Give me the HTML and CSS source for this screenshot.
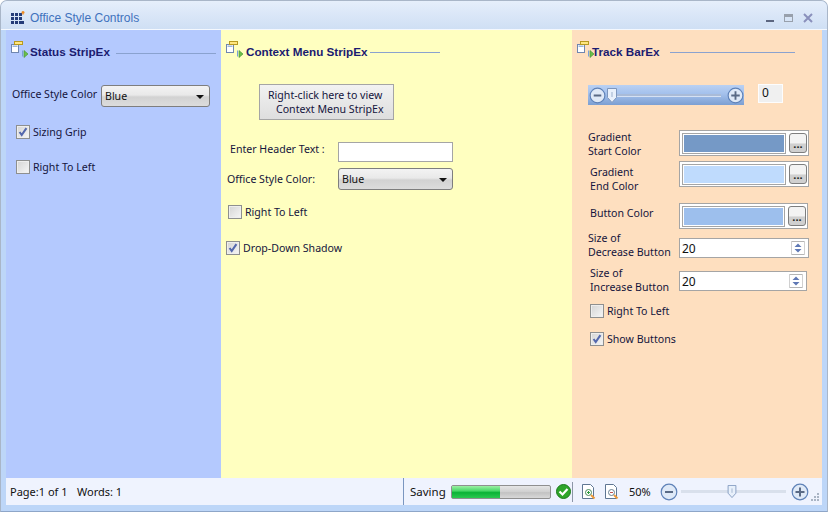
FILE: index.html
```html
<!DOCTYPE html>
<html lang="en">
<head>
<meta charset="utf-8">
<title>Office Style Controls</title>
<link rel="stylesheet" href="styles.css">
</head>
<body>
<svg class="defs" width="0" height="0">
  <symbol id="hdr" viewBox="0 0 18 18">
    <rect x="0.5" y="3.500" width="7" height="8" fill="#fff" stroke="#6f86b0"/>
    <rect x="1.5" y="4.500" width="5" height="1.500" fill="#9db7dc"/>
    <rect x="3.5" y="0.500" width="8" height="3" fill="#ffe680" stroke="#b89a20"/>
    <path d="M11.500 9.500v6" stroke="#7aa0d8"/>
    <path d="M13 9.500l4 3.500-4 3.500z" fill="#6cc04a" stroke="#3f9030" stroke-width=".6"/>
  </symbol>
  <symbol id="check" viewBox="0 0 14 14">
    <path d="M3 7l2.500 3.500L11 2.500" fill="none" stroke="#5468ad" stroke-width="2.400"/>
  </symbol>
  <symbol id="minus" viewBox="0 0 18 18">
    <circle cx="9" cy="9" r="7.800" fill="#dfe9f7" stroke="#5f82b8" stroke-width="1.200"/>
    <path d="M5 9h8" stroke="#5a6a85" stroke-width="2"/>
  </symbol>
  <symbol id="plus" viewBox="0 0 18 18">
    <circle cx="9" cy="9" r="7.800" fill="#dfe9f7" stroke="#5f82b8" stroke-width="1.200"/>
    <path d="M4.500 9h9M9 4.500v9" stroke="#5a6a85" stroke-width="2"/>
  </symbol>
  <symbol id="thumb" viewBox="0 0 10 15">
    <path d="M.5.500h9v9l-4.500 5-4.500-5z" fill="#e8f0fb" stroke="#7d96bd"/>
    <path d="M5 4v5" stroke="#9db0cc"/>
  </symbol>
  <symbol id="spin" viewBox="0 0 14 14">
    <path d="M0 .500h14M0 13.500h14" stroke="#b5b5b5"/>
    <path d="M7 2.500l3.500 3.500h-7zM7 11.500L3.500 8h7z" fill="#5f78b5"/>
    <path d="M.5 0v14M13.500 0v14" stroke="#d0d0d0"/>
  </symbol>
</svg>

<div class="window">
  <header class="titlebar">
    <svg class="app-icon" width="14" height="14" viewBox="0 0 14 14">
      <path d="M0 2h3v3H0zM4 2h3v3H4zM8 2h3v3H8zM0 6h3v3H0zM4 6h3v3H4zM8 6h3v3H8zM0 10h3v3H0zM4 10h3v3H4zM8 10h5v3H8z" fill="#253c78"/>
      <path d="M10.500 1.500h3M12 0v3.500" stroke="#ee8a20" stroke-width="1.500"/>
    </svg>
    <span class="title">Office Style Controls</span>
    <div class="caption">
      <span class="cap-min"></span>
      <span class="cap-max"></span>
      <svg width="10" height="10" viewBox="0 0 10 10"><path d="M1 1l8 8M9 1L1 9" stroke="#8a90bc" stroke-width="2"/></svg>
    </div>
  </header>

  <main class="panels">
    <section class="panel panel-blue">
      <div class="head">
        <svg class="hdr-icon" width="18" height="18"><use href="#hdr"/></svg>
        <h2 class="head-title s-title">Status StripEx</h2>
        <span class="head-line s-line"></span>
      </div>
      <div class="row s-color">
        <span class="lbl s-lbl">Office Style Color</span>
        <div class="combo s-combo">Blue</div>
      </div>
      <label class="chk s-grip"><span class="box on"><svg width="12" height="12"><use href="#check"/></svg></span>Sizing Grip</label>
      <label class="chk s-rtl"><span class="box"></span>Right To Left</label>
    </section>

    <section class="panel panel-yellow">
      <div class="head">
        <svg class="hdr-icon" width="18" height="18"><use href="#hdr"/></svg>
        <h2 class="head-title">Context Menu StripEx</h2>
        <span class="head-line c-line"></span>
      </div>
      <div class="ctx-btn"><span>Right-click here to view</span><span class="ctx-2">Context Menu StripEx</span></div>
      <div class="row c-head">
        <span class="lbl c-lbl1">Enter Header Text :</span>
        <span class="input"></span>
      </div>
      <div class="row c-color">
        <span class="lbl c-lbl2">Office Style Color:</span>
        <div class="combo c-combo">Blue</div>
      </div>
      <label class="chk c-rtl"><span class="box"></span>Right To Left</label>
      <label class="chk c-shadow"><span class="box on"><svg width="12" height="12"><use href="#check"/></svg></span>Drop-Down Shadow</label>
    </section>

    <section class="panel panel-orange">
      <div class="head">
        <svg class="hdr-icon t-icon" width="18" height="18"><use href="#hdr"/></svg>
        <h2 class="head-title">Track BarEx</h2>
        <span class="head-line t-line"></span>
      </div>
      <div class="row t-track">
        <div class="track">
          <svg class="tb-btn" width="17" height="17"><use href="#minus"/></svg>
          <svg class="tb-thumb" width="10" height="15"><use href="#thumb"/></svg>
          <span class="tb-rail"></span>
          <svg class="tb-btn" width="17" height="17"><use href="#plus"/></svg>
        </div>
        <div class="num">0</div>
      </div>
      <div class="row t-r1">
        <span class="lbl2 l0">Gradient<br>Start Color</span>
        <div class="colorbox"><span class="swatch c1"></span><span class="dots">...</span></div>
      </div>
      <div class="row t-r2">
        <span class="lbl2 l2 lt4">Gradient<br>End Color</span>
        <div class="colorbox"><span class="swatch c2"></span><span class="dots">...</span></div>
      </div>
      <div class="row t-r3">
        <span class="lbl2 l2 lt3">Button Color</span>
        <div class="colorbox w129"><span class="swatch c3"></span><span class="dots">...</span></div>
      </div>
      <div class="row t-r4">
        <span class="lbl2 l0">Size of<br>Decrease Button</span>
        <div class="spinner">20<svg width="14" height="14"><use href="#spin"/></svg></div>
      </div>
      <div class="row t-r5">
        <span class="lbl2 l2">Size of<br>Increase Button</span>
        <div class="spinner w128">20<svg width="14" height="14"><use href="#spin"/></svg></div>
      </div>
      <label class="chk t-rtl"><span class="box"></span>Right To Left</label>
      <label class="chk t-show"><span class="box on"><svg width="12" height="12"><use href="#check"/></svg></span>Show Buttons</label>
    </section>
  </main>

  <footer class="status">
    <span class="st-page">Page:1 of 1</span>
    <span class="st-words">Words: 1</span>
    <span class="sep sep1"></span>
    <span class="st-saving">Saving</span>
    <div class="progress"><span class="fill"></span></div>
    <svg class="ok" width="15" height="15" viewBox="0 0 15 15">
      <circle cx="7.500" cy="7.500" r="7" fill="#2fa52a" stroke="#1c7a1c"/>
      <path d="M3.500 7.500l3 3 5-5.500" fill="none" stroke="#fff" stroke-width="2.200"/>
    </svg>
    <span class="sep sep2"></span>
    <svg class="doc doc1" width="14" height="16" viewBox="0 0 14 16">
      <path d="M.5.500h8l3 3v11H.5z" fill="#fff" stroke="#5f7692"/>
      <circle cx="6.500" cy="8.500" r="3" fill="#fff" stroke="#4a8a5a"/>
      <path d="M5 8.500h3M6.500 7v3" stroke="#2d9a3c"/>
      <path d="M9 11l3.500 3.500" stroke="#ee9a3a" stroke-width="2"/>
    </svg>
    <svg class="doc doc2" width="14" height="16" viewBox="0 0 14 16">
      <path d="M.5.500h8l3 3v11H.5z" fill="#fff" stroke="#5f7692"/>
      <circle cx="6.500" cy="8.500" r="3" fill="#fff" stroke="#6a7f90"/>
      <path d="M5 8.500h3" stroke="#c05050"/>
      <path d="M9 11l3.500 3.500" stroke="#ee9a3a" stroke-width="2"/>
    </svg>
    <span class="st-zoom">50%</span>
    <svg class="z-minus" width="18" height="18"><use href="#minus"/></svg>
    <div class="z-track"><svg class="z-thumb" width="10" height="13"><use href="#thumb"/></svg></div>
    <svg class="z-plus" width="18" height="18"><use href="#plus"/></svg>
    <svg class="grip" width="10" height="10" viewBox="0 0 10 10">
      <path d="M7 1h2v2H7zM4 4h2v2H4zM7 4h2v2H7zM1 7h2v2H1zM4 7h2v2H4zM7 7h2v2H7z" fill="#a9b4c4"/>
    </svg>
  </footer>
</div>
</body>
</html>
```

FILE: styles.css
```css
* { box-sizing: border-box; }
html, body { margin: 0; padding: 0; }
body {
  width: 828px;
  height: 512px;
  overflow: hidden;
  background: #fff;
  font-family: "Noto Sans", "Liberation Sans", sans-serif;
  font-size: 10.600px;
  color: #14143c;
}
.defs { position: absolute; }

.window {
  width: 828px;
  height: 512px;
  display: flex;
  flex-direction: column;
  padding: 0 5px 6px;
  border-radius: 7px 7px 0 0;
  border: 1px solid #a9b6c8;
  border-bottom-color: #8ea6c8;
  background: #bdd6f8;
  overflow: hidden;
}

.titlebar {
  flex: 0 0 29px;
  margin: 0 -5px;
  padding: 5px 14px 0 10px;
  display: flex;
  align-items: center;
  border-bottom: 1px solid #f4f8fe;
  background: linear-gradient(#e6effb 0, #dbe7f8 45%, #cfdff4 100%);
}
.app-icon { flex: none; }
.title { margin-left: 5px; color: #3f72bd; font-family: "Liberation Sans", sans-serif; font-size: 12px; }
.caption { margin-left: auto; display: flex; align-items: center; gap: 10px; }
.cap-min { width: 8px; height: 2px; margin-top: 6px; background: #5c6680; }
.cap-max { width: 9px; height: 8px; border: 1px solid #98a0ac; border-top-width: 3px; }

.panels { flex: 1; display: flex; min-height: 0; }
.panel { flex: none; }
.panel-blue { width: 215px; background: #b4c9fe; padding-left: 5px; }
.panel-yellow { width: 351px; background: #ffffc0; padding-left: 5px; }
.panel-orange { width: 250px; background: #fedfbf; padding-left: 5px; }

.head { display: flex; align-items: center; height: 18px; margin-top: 12px; }
.hdr-icon { flex: none; margin-top: -3px; }
.head-title {
  margin: 0 0 0 2px;
  font-family: "Liberation Sans", sans-serif;
  font-size: 11.700px;
  font-weight: bold;
  color: #1b1b70;
  white-space: nowrap;
}
.s-title { margin-left: 1px; }
.head-line { height: 1px; margin-top: 2px; background: #8aa2cf; }
.s-line { width: 100px; margin-left: 6px; margin-top: 4px; }
.c-line { width: 70px; margin-left: 3px; }
.t-line { width: 125px; margin-left: 10px; }
.t-icon { margin-right: -5px; }

.row { display: flex; align-items: center; }
.lbl { white-space: nowrap; }

.combo {
  position: relative;
  height: 22px;
  line-height: 20px;
  padding-left: 3px;
  color: #111;
  border: 1px solid #7e7e7e;
  border-radius: 3px;
  background: linear-gradient(#f3f3f3 0, #e9e9e9 45%, #d2d2d2 55%, #dcdcdc 100%);
}
.combo::after {
  content: "";
  position: absolute;
  right: 5px;
  top: 9px;
  border: 4px solid transparent;
  border-top: 4px solid #111;
  border-bottom: 0;
}

.chk { display: flex; align-items: flex-start; height: 14px; line-height: 14px; color: #14143c; white-space: nowrap; }
.box {
  flex: none;
  width: 14px;
  height: 14px;
  margin-right: 3px;
  display: flex;
  align-items: center;
  justify-content: center;
  border: 1px solid #8e8f8f;
  background: linear-gradient(135deg, #d4d4d4, #f6f6f6);
  box-shadow: inset 0 0 0 1px #eee;
}

/* status strip panel */
.s-color { margin: 25px 0 0 1px; }
.s-lbl { width: 89px; margin-top: -5px; }
.s-combo { width: 109px; }
.s-grip { margin: 18px 0 0 5px; }
.s-rtl { margin: 21px 0 0 5px; }

/* context menu panel */
.ctx-btn {
  width: 135px;
  height: 36px;
  margin: 24px 0 0 33px;
  padding: 0 0 0 8px;
  display: flex;
  flex-direction: column;
  justify-content: center;
  gap: 1px;
  line-height: 13px;
  color: #14143c;
  border: 1px solid #a5a5a5;
  background: linear-gradient(#f2f2f2, #dedede);
  white-space: nowrap;
}
.ctx-2 { margin-left: 8px; }
.c-head { margin-top: 22px; }
.c-lbl1 { width: 112px; padding-left: 4px; margin-top: -6px; }
.input { width: 115px; height: 20px; border: 1px solid #a5a5a5; background: #fff; }
.c-color { margin-top: 6px; }
.c-lbl2 { width: 112px; padding-left: 1px; }
.c-combo { width: 115px; }
.c-rtl { margin: 15px 0 0 2px; }
.c-shadow { margin: 22px 0 0; }

/* track bar panel */
.panel-orange .row { align-items: flex-start; }
.t-track { margin: 24px 0 0 11px; height: 21px; }
.track {
  width: 156px;
  height: 20px;
  margin-top: 1px;
  padding: 0 0 0 1px;
  display: flex;
  align-items: center;
  background: linear-gradient(#b9d1f4, #a3c0ec 45%, #7c9fd2);
}
.tb-btn { flex: none; }
.tb-thumb { flex: none; margin-left: 1px; }
.tb-rail { flex: 1; height: 3px; margin: 0 6px 0 0; background: #a9bbd8; border-bottom: 1px solid #d5e1f3; }
.num {
  width: 25px;
  height: 19px;
  margin-left: 14px;
  padding-left: 3px;
  line-height: 16px;
  font-size: 12px;
  color: #111;
  background: #f0f0f0;
  border: 1px solid #fdfdfd;
}
.lbl2 { display: block; flex: none; width: 102px; line-height: 14px; color: #14143c; white-space: nowrap; }
.l0 { padding-left: 11px; }
.l2 { padding-left: 13px; }
.lt4 { margin-top: 4px; }
.lt3 { margin-top: 3px; }
.colorbox {
  width: 130px;
  height: 26px;
  padding: 0 1px 0 4px;
  display: flex;
  align-items: center;
  gap: 3px;
  border: 1px solid #a5a5a5;
  background: #fff;
}
.w129 { width: 129px; }
.swatch { flex: 1; height: 17px; outline: 1px solid #a5a5a5; outline-offset: 1px; margin: 0 2px 0 0; }
.c1 { background: #7599c6; }
.c2 { background: #bfdbfd; }
.c3 { background: #9dbfed; }
.dots {
  flex: none;
  width: 18px;
  height: 20px;
  padding-top: 4px;
  text-align: center;
  line-height: 12px;
  font-weight: bold;
  font-size: 11px;
  color: #222;
  border: 1px solid #7e7e7e;
  border-radius: 3px;
  background: linear-gradient(#f3f3f3 50%, #d0d0d0 55%);
}
.spinner {
  width: 130px;
  height: 20px;
  padding: 0 3px 0 2px;
  display: flex;
  align-items: center;
  justify-content: space-between;
  font-size: 12px;
  color: #111;
  border: 1px solid #a5a5a5;
  background: #fff;
}
.w128 { width: 128px; }
.t-r1 { margin-top: 25px; height: 28px; }
.t-r2 { margin-top: 3px; height: 32px; }
.t-r3 { margin-top: 10px; height: 26px; }
.t-r4 { margin-top: 2px; height: 28px; }
.t-r4 .spinner { margin-top: 7px; }
.t-r5 { margin-top: 7px; height: 28px; }
.t-r5 .spinner { margin-top: 5px; }
.t-rtl { margin: 10px 0 0 13px; }
.t-show { margin: 14px 0 0 13px; }

/* status bar */
.status {
  flex: 0 0 27px;
  display: flex;
  align-items: center;
  font-size: 11px;
  background: #eff3fe;
  color: #111;
  white-space: nowrap;
}
.status > * { flex: none; }
.st-page { margin-left: 4px; width: 67px; }
.st-words { width: 326px; }
.sep { width: 1px; height: 27px; background: #7a96c0; }
.st-saving { margin-left: 6px; width: 41px; font-size: 11.500px; }
.progress {
  width: 100px;
  height: 14px;
  border: 1px solid #8f8f8f;
  border-radius: 2px;
  background: linear-gradient(#e6e6e6, #cfcfcf 50%, #c2c2c2 55%, #d8d8d8);
}
.fill {
  display: block;
  width: 48px;
  height: 12px;
  background: linear-gradient(#9cf0a4, #4ad868 40%, #0bb336 55%, #2cc850);
}
.ok { margin-left: 5px; }
.sep2 { height: 20px; margin-left: 1px; background: #8c96a8; }
.doc1 { margin-left: 9px; }
.doc2 { margin-left: 9px; }
.st-zoom { margin-left: 10px; width: 31px; }
.z-track {
  position: relative;
  width: 105px;
  height: 3px;
  margin: 0 5px 0 3px;
  background: #d9e0ec;
}
.z-thumb { position: absolute; left: 46px; top: -5px; }
.grip { margin: 11px 0 0 1px; }
```
